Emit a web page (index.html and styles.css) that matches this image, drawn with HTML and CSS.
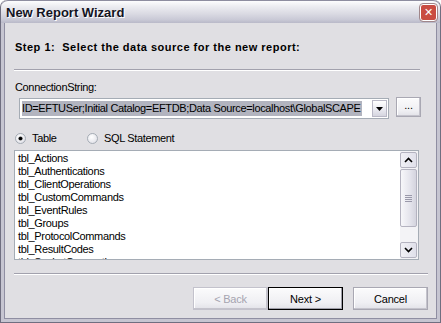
FILE: index.html
```html
<!DOCTYPE html>
<html lang="en">
  <head>
    <meta name="viewport" content="width=device-width, initial-scale=1">
    <title>New Report Wizard</title>
    <link rel="stylesheet" href="styles.css">
  </head>
  <body>
  <div class="window">
    <div class="titlebar">
      <span class="title">New Report Wizard</span>
      <div class="xbtn"><span class="xmark">&#x2715;</span></div>
    </div>
    <div class="content">
      <div class="step">Step 1:&nbsp; Select the data source for the new report:</div>
      <div class="etch top-etch"></div>

      <div class="label">ConnectionString:</div>
      <div class="conn-row">
        <div class="combo">
          <span class="combo-text"><span class="sel">ID=EFTUSer;Initial Catalog=EFTDB;Data Source=localhost\GlobalSCAPE</span></span>
          <span class="combo-btn">
            <svg width="7" height="4" viewBox="0 0 7 4"><path d="M0 0 H7 L3.5 4 Z" fill="#000"/></svg>
          </span>
        </div>
        <button class="btn dots">...</button>
      </div>

      <div class="radios">
        <label class="radio first"><span class="dot checked"></span>Table</label>
        <label class="radio"><span class="dot"></span>SQL Statement</label>
      </div>

      <div class="listbox">
        <div class="items">
          <div>tbl_Actions</div>
          <div>tbl_Authentications</div>
          <div>tbl_ClientOperations</div>
          <div>tbl_CustomCommands</div>
          <div>tbl_EventRules</div>
          <div>tbl_Groups</div>
          <div>tbl_ProtocolCommands</div>
          <div>tbl_ResultCodes</div>
          <div>tbl_SocketConnections</div>
        </div>
        <div class="scrollbar">
          <span class="sb-btn">
            <svg width="9" height="6" viewBox="0 0 9 6"><path d="M1 5 L4.5 1.5 L8 5" fill="none" stroke="#000" stroke-width="1.6"/></svg>
          </span>
          <span class="thumb"><span class="grip"></span></span>
          <span class="track"></span>
          <span class="sb-btn">
            <svg width="9" height="6" viewBox="0 0 9 6"><path d="M1 1 L4.5 4.5 L8 1" fill="none" stroke="#000" stroke-width="1.6"/></svg>
          </span>
        </div>
      </div>

      <div class="etch bottom-etch"></div>

      <div class="footer">
        <button class="btn" disabled>&lt; Back</button>
        <button class="btn default">Next &gt;</button>
        <button class="btn cancel">Cancel</button>
      </div>
    </div>
  </div>
  </body>
</html>
```

FILE: styles.css
```css
html, body {
  margin: 0;
  padding: 0;
  width: 100%;
  height: 100%;
  background: #ffffff;
}

.window {
  width: 441px;
  height: 323px;
  box-sizing: border-box;
  display: flex;
  flex-direction: column;
  background: #e0dfe3;
  border: 1px solid #6f6e80;
  border-top: none;
  border-radius: 7px 7px 0 0;
  font-family: "Liberation Sans", Arial, sans-serif;
  font-size: 11px;
  letter-spacing: -0.35px;
  color: #000;
  overflow: hidden;
}

.titlebar {
  height: 23px;
  flex-shrink: 0;
  display: flex;
  align-items: center;
  padding: 0 3px 0 5px;
  background: linear-gradient(#fdfdfe 0%, #ececf1 25%, #d9d9e2 60%, #c9c9d6 85%, #b9b9c8 100%);
  border-top: 1px solid #8e8da0;
  border-radius: 7px 7px 0 0;
  box-sizing: border-box;
}

.title {
  flex-grow: 1;
  font-size: 13px;
  font-weight: bold;
  letter-spacing: 0;
  color: #14141f;
  text-shadow: 1px 1px #ffffff;
  padding-top: 1px;
}

.xbtn {
  width: 17px;
  height: 17px;
  flex-shrink: 0;
  margin-top: 1px;
  box-sizing: border-box;
  border: 1px solid #ffffff;
  border-radius: 3px;
  background-color: #c94c42;
  outline: 1px solid #a0868a;
  display: flex;
  align-items: center;
  justify-content: center;
}

.xmark {
  color: #ffffff;
  font-family: "DejaVu Sans", sans-serif;
  font-size: 11px;
  font-weight: bold;
  letter-spacing: 0;
  line-height: 1;
}

.content {
  flex-grow: 1;
  display: flex;
  flex-direction: column;
  padding: 0 9px 0 10px;
  border-left: 3px solid #c6c5d1;
  border-right: 3px solid #c6c5d1;
  border-bottom: 3px solid #c6c5d1;
  box-shadow: inset 1px 0 #8f8ea2, inset -1px 0 #8f8ea2, inset 0 -1px #8f8ea2;
}

.step {
  font-weight: bold;
  letter-spacing: 0.5px;
  line-height: 13px;
  margin-top: 18px;
  padding-left: 1px;
}

.etch {
  height: 0;
  flex-shrink: 0;
  border-top: 1px solid #a2a1ad;
  border-bottom: 1px solid #ffffff;
}

.top-etch {
  margin: 15px 8px 0 0;
}

.label {
  line-height: 13px;
  margin-top: 10px;
  padding-left: 1px;
}

.conn-row {
  display: flex;
  align-items: flex-start;
  margin-top: 4px;
  padding-left: 5px;
}

.combo {
  width: 370px;
  height: 21px;
  box-sizing: border-box;
  display: flex;
  align-items: stretch;
  background: #ffffff;
  border: 1px solid #a5acb5;
  padding: 1px;
}

.combo-text {
  flex-grow: 1;
  overflow: hidden;
  white-space: nowrap;
  display: flex;
  align-items: center;
  padding-left: 1px;
}

.sel {
  background: #b2b4bf;
  line-height: 15px;
  padding-right: 1px;
}

.combo-btn {
  width: 15px;
  flex-shrink: 0;
  display: flex;
  align-items: center;
  justify-content: center;
  background: linear-gradient(#ffffff, #e8e8ef 60%, #d5d5df);
  border: 1px solid #b9b8c6;
  box-sizing: border-box;
}

.btn {
  font-family: "Liberation Sans", Arial, sans-serif;
  font-size: 11px;
  letter-spacing: -0.2px;
  color: #000;
  background: linear-gradient(#fbfbfc, #efeff3 70%, #e2e2e8);
  border: 1px solid #a9a8b3;
  box-shadow: inset -1px -1px #c4c3cc, inset 1px 1px #ffffff;
  padding: 0;
  margin: 0;
}

.dots {
  width: 25px;
  height: 20px;
  margin-left: 7px;
  margin-top: -1px;
  padding-bottom: 4px;
}

.radios {
  display: flex;
  margin-top: 13px;
  padding-left: 1px;
  line-height: 13px;
}

.radio {
  display: flex;
  align-items: center;
  gap: 6px;
  white-space: nowrap;
}

.radio.first {
  width: 72px;
}

.dot {
  width: 11px;
  height: 11px;
  flex-shrink: 0;
  box-sizing: border-box;
  border-radius: 50%;
  border: 1px solid #a5acb5;
  background: radial-gradient(circle at 40% 35%, #ffffff, #e6e6ec 70%, #d0d0da);
  display: flex;
  align-items: center;
  justify-content: center;
}

.dot.checked::after {
  content: "";
  width: 3px;
  height: 3px;
  border-radius: 50%;
  background: #000;
  box-shadow: 0 0 0 0.6px #333;
}

.listbox {
  margin-top: 5px;
  width: 405px;
  height: 110px;
  flex-shrink: 0;
  box-sizing: border-box;
  background: #ffffff;
  border: 1px solid #a5acb5;
  display: flex;
  overflow: hidden;
}

.items {
  flex-grow: 1;
  padding: 1px 0 0 3px;
  line-height: 13px;
  white-space: nowrap;
}

.scrollbar {
  width: 17px;
  flex-shrink: 0;
  display: flex;
  flex-direction: column;
  background: #f3f3f6;
  padding: 1px 1px 1px 0;
}

.sb-btn {
  height: 16px;
  flex-shrink: 0;
  display: flex;
  align-items: center;
  justify-content: center;
  border: 1px solid #b4b3c0;
  border-radius: 2px;
  box-sizing: border-box;
  background: linear-gradient(90deg, #f0f0f5, #e0e0ea);
}

.thumb {
  height: 58px;
  margin-top: 1px;
  flex-shrink: 0;
  border: 1px solid #b4b3c0;
  border-radius: 2px;
  box-sizing: border-box;
  background: linear-gradient(90deg, #f7f7fa, #e4e4ec 60%, #d4d4de);
  display: flex;
  align-items: center;
  justify-content: center;
}

.grip {
  width: 7px;
  height: 7px;
  background: repeating-linear-gradient(#9a99aa 0 1px, transparent 1px 2px);
}

.track {
  flex-grow: 1;
}

.bottom-etch {
  margin-top: 13px;
}

.footer {
  display: flex;
  justify-content: flex-end;
  margin-top: 12px;
}

.footer .btn {
  width: 75px;
  height: 23px;
}

.footer .btn[disabled] {
  color: #a5a4b0;
  border-color: #c3c2cc;
}

.footer .default {
  border: 1px solid #000;
  box-shadow: inset -1px -1px #9f9ea9, inset 1px 1px #ffffff;
}

.footer .cancel {
  margin-left: 10px;
}
```
